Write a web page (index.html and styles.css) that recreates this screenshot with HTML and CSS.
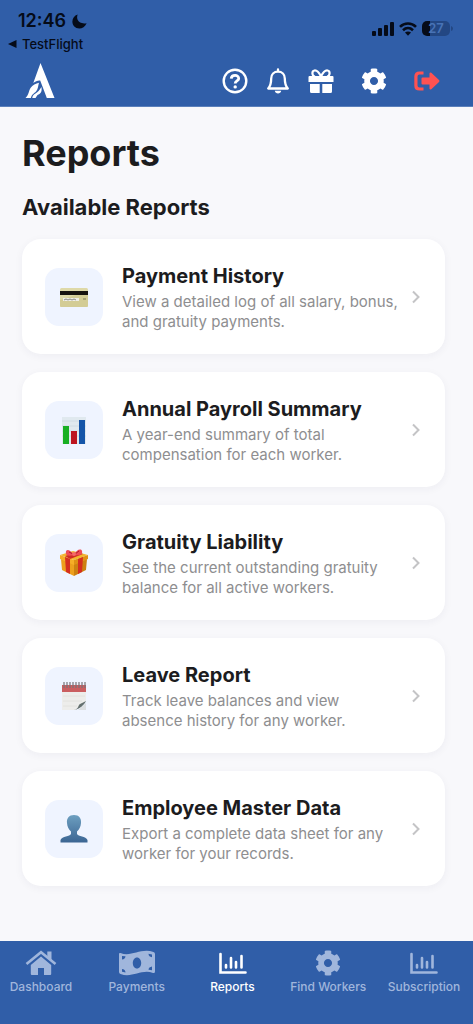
FILE: index.html
```html
<!DOCTYPE html>
<html lang="en">
<head>
    <meta charset="UTF-8">
    <meta name="viewport" content="width=device-width, initial-scale=1.0">
    <title>Reports</title>
    <link rel="stylesheet" href="styles.css">
</head>
<body>
    <header>
        <div class="status">
            <div class="status-left">
                <div class="time">12:46
                    <svg width="15" height="15" viewBox="0 0 16 16" fill="currentColor"><path d="M6 0.6C4.300 5 6.500 11.300 15.600 9.800C14 13.600 11 15.400 7.800 15.400C3.500 15.400 0.400 12.200 0.400 8C0.400 4.600 2.600 1.700 6 0.600z"/></svg>
                </div>
                <a class="back" href="#"><svg width="9" height="8" viewBox="0 0 9 8" fill="currentColor"><path d="M0 4l8.500-4v8z"/></svg>TestFlight</a>
            </div>
            <div class="status-right">
                <svg width="22" height="14" viewBox="0 0 22 14" fill="currentColor"><rect x="0" y="9" width="4" height="5" rx="1"/><rect x="6" y="6" width="4" height="8" rx="1"/><rect x="12" y="3" width="4" height="11" rx="1"/><rect x="18" y="0" width="4" height="14" rx="1"/></svg>
                <svg width="18" height="14" viewBox="0 0 18 14" fill="none" stroke="currentColor" stroke-width="2.600"><path d="M1 4.800C5.500 0.300 12.500 0.300 17 4.800M4 8.200C7 5.400 11 5.400 14 8.200"/><path d="M6 10.600C7.800 9.200 10.200 9.200 12 10.600L9 13.800z" fill="currentColor" stroke="none"/></svg>
                <div class="battery-wrap">
                    <span class="battery">27</span>
                    <svg width="2" height="5" viewBox="0 0 2 5"><path d="M0 0Q2 0.500 2 2.500T0 5z" fill="#234783"/></svg>
                </div>
            </div>
        </div>
        <div class="topbar">
            <svg class="logo" width="30" height="36" viewBox="0 0 30 36" fill="#fff"><path d="M15.500 0L29.500 35H21.800L15.200 17.500C12.500 17.300 10.500 18.200 8.300 20z"/><path d="M0.500 35C4 32 3.500 28 5.500 25C7.500 21.800 11 20.500 14 19.800C13 23 13.300 26 11 28.500C9 30.500 7 31 5.800 35z"/><path d="M16.500 24C17.200 29 15.500 31 12.500 32L10.500 35H7.200C7.500 32 10 31 12.200 29.300C14.500 27.500 14.800 26 16.500 24z"/></svg>
            <div class="actions">
                <button aria-label="Help"><svg width="26" height="26" viewBox="0 0 26 26" fill="none" stroke="#fff" stroke-width="2.400"><circle cx="13" cy="13" r="11.300"/><path d="M9.200 10.600C9.700 6.300 16.800 6.500 16.700 10.600C16.600 13 13.200 13 13.200 15.500" stroke-width="2.800"/><circle cx="13.200" cy="18.900" r="1.700" fill="#fff" stroke="none"/></svg></button>
                <button aria-label="Notifications"><svg width="26" height="26" viewBox="0 0 26 26" fill="none" stroke="#fff" stroke-width="2.300" stroke-linejoin="round" stroke-linecap="round"><path d="M13 1.500V3.500M3.200 20.500H22.800C20.500 18 19.800 16 19.800 10.500C19.800 6.500 17 3.700 13 3.700S6.200 6.500 6.200 10.500C6.200 16 5.500 18 3.200 20.500z"/><path d="M9.800 22.800H16.200C15.700 26.300 10.300 26.300 9.800 22.800z" fill="#fff" stroke="none"/></svg></button>
                <button aria-label="Gifts"><svg width="26" height="26" viewBox="0 0 26 26" fill="#fff"><path d="M1.500 8H24.500Q25.500 8 25.500 9V14H0.500V9Q0.500 8 1.500 8z"/><path d="M2 16H11.700V25H3.500Q2 25 2 23.500zM14.300 16H24V23.500Q24 25 22.500 25H14.300z"/><path d="M13 8.500C10.500 3.500 8.500 2.200 6.500 2.500C3.500 3 3.800 8 7 8.500M13 8.500C15.500 3.500 17.500 2.200 19.500 2.500C22.500 3 22.200 8 19 8.500" fill="none" stroke="#fff" stroke-width="2.200"/></svg></button>
                <button class="spaced" aria-label="Settings"><svg width="26" height="26" viewBox="0 0 512 512" fill="#fff"><path d="M487.400 315.700l-42.600-24.600c4.300-23.200 4.300-47 0-70.200l42.600-24.600c4.900-2.800 7.100-8.600 5.500-14-11.100-35.600-30-67.800-54.700-94.600-3.800-4.100-10-5.100-14.800-2.300L380.800 110c-17.900-15.400-38.500-27.300-60.800-35.100V25.800c0-5.600-3.900-10.500-9.400-11.700-36.700-8.200-74.300-7.800-109.200 0-5.500 1.200-9.400 6.100-9.400 11.700V75c-22.200 7.900-42.800 19.800-60.800 35.100L88.700 85.500c-4.900-2.800-11-1.900-14.800 2.300-24.700 26.700-43.600 58.900-54.700 94.600-1.700 5.400.6 11.200 5.500 14L67.300 221c-4.300 23.200-4.300 47 0 70.200l-42.600 24.600c-4.900 2.800-7.100 8.600-5.500 14 11.100 35.600 30 67.800 54.700 94.600 3.800 4.100 10 5.100 14.800 2.300l42.600-24.600c17.900 15.400 38.500 27.300 60.800 35.100v49.200c0 5.600 3.900 10.500 9.400 11.700 36.700 8.200 74.300 7.800 109.200 0 5.500-1.200 9.400-6.100 9.400-11.700v-49.200c22.200-7.900 42.800-19.800 60.800-35.100l42.600 24.600c4.900 2.800 11 1.900 14.800-2.300 24.700-26.700 43.600-58.900 54.700-94.600 1.500-5.500-.7-11.300-5.600-14.100zM256 336c-44.100 0-80-35.900-80-80s35.900-80 80-80 80 35.900 80 80-35.900 80-80 80z"/></svg></button>
                <button class="spaced" aria-label="Log out"><svg width="26" height="26" viewBox="0 0 26 26"><path d="M9.500 5H5.500Q1.900 5 1.900 8.600V17.400Q1.900 21 5.500 21H9.500" fill="none" stroke="#ff5252" stroke-width="3.200"/><path d="M8.500 9.500H15.500V5.200Q16 3.800 17.300 4.800L25 12Q26 13 25 14L17.300 21.200Q16 22.200 15.500 20.800V16.500H8.500Q7.500 16.500 7.500 15.500V10.500Q7.500 9.500 8.500 9.500z" fill="#ff5252"/></svg></button>
            </div>
        </div>
    </header>
    <main>
        <h1>Reports</h1>
        <h2>Available Reports</h2>
        <div class="cards">
            <a class="card" href="#">
                <span class="card-icon"><svg width="30" height="30" viewBox="0 0 30 30"><rect x="1" y="6" width="28" height="19" rx="1.500" fill="#ded9a9"/><path d="M1 18l28-9v14.500q0 1.500-1.500 1.500h-25Q1 25 1 23.500z" fill="#d3cc95"/><path d="M1 9h28v4H1z" fill="#16130f"/><path d="M4 16h16v3H4z" fill="#efeee5"/><path d="M5 18l2-1 2 1 2-1 2 1 2-1 2 1" fill="none" stroke="#8b8b85"/><path d="M24 16h3v2h-3z" fill="#aaa576"/></svg></span>
                <span class="card-text"><strong>Payment History</strong><span>View a detailed log of all salary, bonus, and gratuity payments.</span></span>
                <svg class="chevron" width="8" height="14" viewBox="0 0 8 14"><path d="M1 1.500L6.500 7L1 12.500"/></svg>
            </a>
            <a class="card" href="#">
                <span class="card-icon"><svg width="30" height="30" viewBox="0 0 30 30"><path d="M3 2h24v27H3z" fill="#e0e9ef"/><path d="M3 6h24M3 11h24M3 16h24M3 21h24" stroke="#d0dce4"/><path d="M4 11h6v18H4z" fill="#18af23"/><path d="M12 16h6v13h-6z" fill="#bd1420"/><path d="M20 5h6v24h-6z" fill="#1555a9"/></svg></span>
                <span class="card-text"><strong>Annual Payroll Summary</strong><span>A year-end summary of total<br>compensation for each worker.</span></span>
                <svg class="chevron" width="8" height="14" viewBox="0 0 8 14"><path d="M1 1.500L6.500 7L1 12.500"/></svg>
            </a>
            <a class="card" href="#">
                <span class="card-icon"><svg width="30" height="30" viewBox="0 0 30 30"><path d="M2 11l13 5v12L3 22z" fill="#eda01d"/><path d="M15 16l13-5-1 11-12 6z" fill="#cd8111"/><path d="M1 7l13-4 15 4-14 5z" fill="#f4b62e"/><path d="M1 7l14 5v5L1 11z" fill="#f6ae27"/><path d="M29 7l-14 5v5l14-6z" fill="#df9115"/><path d="M6 9l5 2v15l-4-2zM19 11l5-2-1 15-4 2z" fill="#d52f1f"/><path d="M6 8l13-4 5 2-13 5z" fill="#cf2c25"/><path d="M15 7C10 0 6 1 7 6C8 8 11 8 15 7C20 8 24 7 23 3C22 0 17 2 15 7z" fill="#ef4b55"/><path d="M14 6l-4-2M16 6l4-3" stroke="#a91d2d"/><ellipse cx="15" cy="6" rx="2" ry="2" fill="#f56b69"/></svg></span>
                <span class="card-text"><strong>Gratuity Liability</strong><span>See the current outstanding gratuity balance for all active workers.</span></span>
                <svg class="chevron" width="8" height="14" viewBox="0 0 8 14"><path d="M1 1.500L6.500 7L1 12.500"/></svg>
            </a>
            <a class="card" href="#">
                <span class="card-icon"><svg width="30" height="30" viewBox="0 0 30 30"><path d="M3 5h24v15l-10 9H3z" fill="#ededeb"/><path d="M3 4h24v7H3z" fill="#ca5e60"/><path d="M4 15h22M4 20h19M4 25h14" stroke="#e2e2de"/><path d="M5 1v6M8 1v6M11 1v6M14 1v6M17 1v6M20 1v6M23 1v6M26 1v6" stroke="#77747a" stroke-width="1.200"/><path d="M15 29C20 28 19 24 21 23L27 20C25 24 21 28 15 29z" fill="#65716f"/><path d="M19 29l8-7v7z" fill="#dcdfe1"/></svg></span>
                <span class="card-text"><strong>Leave Report</strong><span>Track leave balances and view<br>absence history for any worker.</span></span>
                <svg class="chevron" width="8" height="14" viewBox="0 0 8 14"><path d="M1 1.500L6.500 7L1 12.500"/></svg>
            </a>
            <a class="card" href="#">
                <span class="card-icon"><svg width="30" height="30" viewBox="0 0 30 30"><defs><linearGradient id="person" x1="0" y1="0" x2="0" y2="1"><stop offset="0" stop-color="#6d9fc0"/><stop offset="1" stop-color="#3b6593"/></linearGradient></defs><path d="M15 1C10 1 7.500 4.500 8 9C8.200 13 10 15.500 12 17.500V20C11 22.500 3 22 1.500 26V28.500H28.500V26C27 22 19 22.500 18 20V17.500C20 15.500 21.800 13 22 9C22.500 4.500 20 1 15 1z" fill="url(#person)"/></svg></span>
                <span class="card-text"><strong>Employee Master Data</strong><span>Export a complete data sheet for any worker for your records.</span></span>
                <svg class="chevron" width="8" height="14" viewBox="0 0 8 14"><path d="M1 1.500L6.500 7L1 12.500"/></svg>
            </a>
        </div>
    </main>
    <nav class="tabs">
        <a href="#"><svg width="32" height="26" viewBox="0 0 32 26" fill="currentColor"><path d="M16 6.500L5.800 15V24Q5.800 25 6.800 25H13V18H19V25H25.200Q26.200 25 26.200 24V15z"/><path d="M1.500 14L16 2.200L30.500 14" fill="none" stroke="currentColor" stroke-width="2.600"/><path d="M22.300 1.500h4.200v9.500l-4.200-3.500z"/></svg>Dashboard</a>
        <a href="#"><svg width="36" height="26" viewBox="0 0 36 26" fill="currentColor" fill-rule="evenodd"><path d="M1.500 3C12 7.500 22-2.500 34.500 2Q36 2.500 36 4V21.500Q36 23.500 34 23C23 18.500 13 28.500 1.500 24Q0 23.500 0 22V4Q0 2.500 1.500 3zM18 7.500C15.500 7.500 13.800 10 13.800 13S15.500 18.500 18 18.500 22.200 16 22.200 13 20.500 7.500 18 7.500zM3 6V9.500Q6.300 9 6.500 6.200zM29.500 3.800Q29.700 7 33 7.200V4.500zM3 19V21.800L6.500 22.500Q6.300 19.300 3 19zM33 16.500Q29.700 17 29.500 19.800L33 20.200z"/></svg>Payments</a>
        <a class="active" href="#"><svg width="28" height="26" viewBox="0 0 28 26" fill="none" stroke="currentColor" stroke-width="2.600" stroke-linecap="round"><path d="M1.500 4V22.500H26.500M7 15V17.500M12 8V17.500M17 12V17.500M22.500 6V17.500"/></svg>Reports</a>
        <a href="#"><svg width="28" height="26" viewBox="0 0 512 512" fill="currentColor"><path d="M487.400 315.700l-42.600-24.600c4.300-23.200 4.300-47 0-70.200l42.600-24.600c4.900-2.800 7.100-8.600 5.500-14-11.100-35.600-30-67.800-54.700-94.600-3.800-4.100-10-5.100-14.800-2.300L380.800 110c-17.900-15.400-38.500-27.300-60.800-35.100V25.800c0-5.600-3.900-10.500-9.400-11.700-36.700-8.200-74.300-7.800-109.200 0-5.500 1.200-9.400 6.100-9.400 11.700V75c-22.200 7.900-42.800 19.800-60.800 35.100L88.700 85.500c-4.900-2.800-11-1.900-14.800 2.300-24.700 26.700-43.600 58.900-54.700 94.600-1.700 5.400.6 11.200 5.500 14L67.300 221c-4.300 23.200-4.300 47 0 70.200l-42.600 24.600c-4.900 2.800-7.100 8.600-5.500 14 11.100 35.600 30 67.800 54.700 94.600 3.800 4.100 10 5.100 14.800 2.300l42.600-24.600c17.900 15.400 38.500 27.300 60.800 35.100v49.200c0 5.600 3.900 10.500 9.400 11.700 36.700 8.200 74.300 7.800 109.200 0 5.500-1.200 9.400-6.100 9.400-11.700v-49.200c22.200-7.900 42.800-19.800 60.800-35.100l42.600 24.600c4.900 2.800 11 1.900 14.800-2.300 24.700-26.700 43.600-58.900 54.700-94.600 1.500-5.500-.7-11.300-5.600-14.100zM256 336c-44.100 0-80-35.900-80-80s35.900-80 80-80 80 35.900 80 80-35.900 80-80 80z"/></svg>Find Workers</a>
        <a href="#"><svg width="28" height="26" viewBox="0 0 28 26" fill="none" stroke="currentColor" stroke-width="2.600" stroke-linecap="round"><path d="M1.500 4V22.500H26.500M7 15V17.500M12 8V17.500M17 12V17.500M22.500 6V17.500"/></svg>Subscription</a>
    </nav>
</body>
</html>
```
FILE: styles.css
```css
* {
    box-sizing: border-box;
}
body {
    font-family: Inter, "Liberation Sans", sans-serif;
    margin: 0;
    display: flex;
    flex-direction: column;
    min-height: 100vh;
    background-color: #f8f8fb;
    color: #1c1c1e;
}
a {
    color: inherit;
    text-decoration: none;
}
svg {
    display: block;
    flex-shrink: 0;
}
header {
    background-color: #305ea8;
    padding-bottom: 7px;
    border-bottom: 1px solid #5b80bb;
}
.status {
    display: flex;
    justify-content: space-between;
    padding: 10px 20px 0 8px;
    color: #050b18;
}
.time {
    display: flex;
    align-items: center;
    gap: 6px;
    padding-left: 10px;
    font-size: 18px;
    line-height: 22px;
    font-weight: 600;
}
.back {
    display: flex;
    align-items: center;
    gap: 5px;
    font-size: 13px;
    line-height: 24px;
    font-weight: 500;
}
.status-right {
    display: flex;
    align-items: center;
    align-self: flex-start;
    gap: 5px;
    padding-top: 11px;
}
.battery-wrap {
    display: flex;
    align-items: center;
    gap: 1px;
}
.battery {
    width: 28px;
    border-radius: 5px;
    background: linear-gradient(to right, #050b18 27%, #234783 27%);
    color: #4873b6;
    font-size: 13px;
    line-height: 15px;
    font-weight: 600;
    text-align: center;
}
.topbar {
    display: flex;
    align-items: center;
    justify-content: space-between;
    padding: 7px 33px 0 25px;
}
.actions {
    display: flex;
    gap: 17px;
}
.actions button {
    padding: 0;
    border: 0;
    background: none;
}
.actions .spaced {
    margin-left: 10px;
}
main {
    flex-grow: 1;
    padding: 24px 28px 24px 22px;
}
h1 {
    margin: 0;
    font-size: 36px;
    line-height: 44px;
    font-weight: 700;
}
h2 {
    margin: 18px 0;
    font-size: 22px;
    line-height: 28px;
    font-weight: 700;
}
.cards {
    display: flex;
    flex-direction: column;
    gap: 18px;
}
.card {
    display: flex;
    align-items: center;
    padding: 22px 23px;
    border-radius: 19px;
    background-color: #fff;
    box-shadow: 0 2px 9px rgba(30, 40, 70, 0.05);
}
.card-icon {
    display: flex;
    align-items: center;
    justify-content: center;
    flex-shrink: 0;
    width: 58px;
    height: 58px;
    margin-right: 19px;
    border-radius: 14px;
    background-color: #eff4ff;
}
.card-text {
    flex: 1;
    padding-top: 3px;
    color: #8e8e90;
    font-size: 15px;
    line-height: 20px;
}
.card-text strong {
    display: block;
    margin-bottom: 3px;
    color: #1c1c1e;
    font-size: 20px;
    line-height: 25px;
    font-weight: 700;
}
.chevron {
    margin: 0 2px 0 3px;
    fill: none;
    stroke: #c4c4c6;
    stroke-width: 2;
}
.tabs {
    display: flex;
    justify-content: space-between;
    padding: 9px 11px 29px 3px;
    background-color: #305ea8;
    color: #a0b6dc;
}
.tabs a {
    display: flex;
    flex-direction: column;
    align-items: center;
    gap: 3px;
    width: 76px;
    font-size: 12px;
    line-height: 16px;
    font-weight: 500;
    white-space: nowrap;
}
.tabs .active {
    color: #fff;
}
```
